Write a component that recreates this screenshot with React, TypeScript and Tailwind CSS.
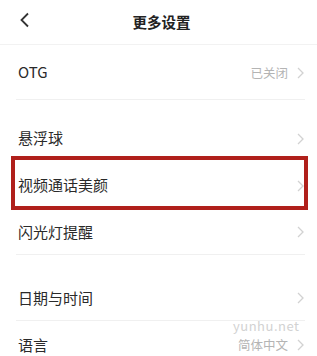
const font = { fontFamily: '"Noto Sans CJK SC", "Noto Sans", sans-serif' };

function Chevron() {
  return (
    <svg width="7" height="12" viewBox="0 0 7 12" className="shrink-0">
      <path d="M1 1l5 5-5 5" fill="none" stroke="#d2d2d2" strokeWidth="1.3" />
    </svg>
  );
}

interface RowProps {
  label: string;
  value?: string;
  divider?: boolean;
  className?: string;
  children?: React.ReactNode;
}

function Row({ label, value, divider, className = "", children }: RowProps) {
  return (
    <div className={`relative flex items-center pl-[18px] pr-[13px] ${className}`}>
      <span className="flex-1 text-[15px] text-[#2a2a2a]">{label}</span>
      {value && <span className="mr-[9px] text-[12.5px] leading-[14px] text-[#b4b4b4]">{value}</span>}
      <Chevron />
      {divider && <div className="absolute bottom-0 left-[16px] right-[12px] h-px bg-[#f0f0f0]" />}
      {children}
    </div>
  );
}

export default function App() {
  return (
    <div className="h-[356px] w-[317px] overflow-hidden bg-white" style={font}>
      <div className="relative flex h-[45px] items-center justify-center border-b border-[#f2f2f2]">
        <svg width="11" height="16" viewBox="0 0 11 16" className="absolute left-[19px] top-[12px]">
          <path d="M9 1.5L2.5 8 9 14.5" fill="none" stroke="#333" strokeWidth="1.8" />
        </svg>
        <span className="ml-[6px] text-[14.5px] font-bold text-[#222]">更多设置</span>
      </div>
      <Row label="OTG" value="已关闭" divider className="h-[55px]" />
      <div className="h-[15px]" />
      <Row label="悬浮球" className="h-[47px]" />
      <Row label="视频通话美颜" className="h-[47px]">
        <div className="absolute left-[11px] right-[9px] top-[-6px] bottom-[-1px] border-[4px] border-[#b0201b]" />
      </Row>
      <Row label="闪光灯提醒" divider className="h-[46px]" />
      <div className="h-[20px]" />
      <Row label="日期与时间" divider className="h-[46px]" />
      <Row label="语言" value="简体中文" className="h-[48px]">
        <span className="absolute left-[233px] top-[-2px] text-[13px] leading-[14px] tracking-[0.5px] text-[#d2d2d2]">
          yunhu.net
        </span>
      </Row>
    </div>
  );
}
